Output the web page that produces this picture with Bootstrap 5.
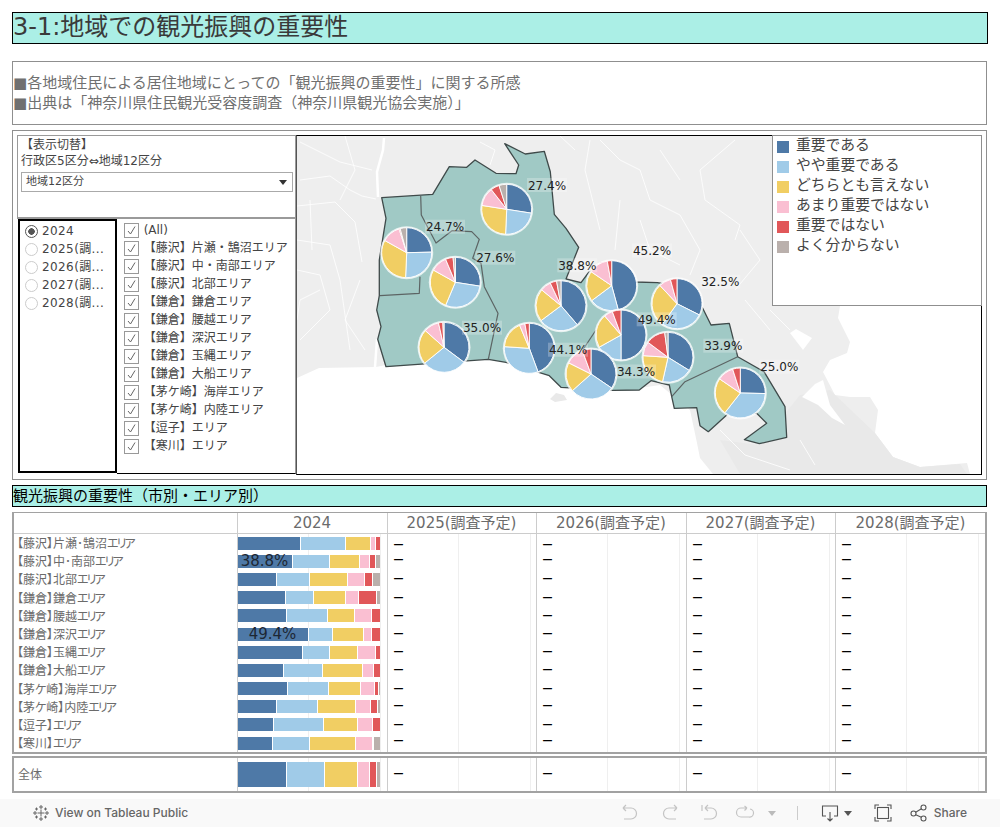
<!DOCTYPE html>
<html lang="ja">
<head>
<meta charset="utf-8">
<title>3-1:地域での観光振興の重要性</title>
<link rel="stylesheet" href="https://cdn.jsdelivr.net/npm/bootstrap@5.3.0/dist/css/bootstrap.min.css">
<style>
html,body{margin:0;width:1000px;height:827px;overflow:hidden;background:#fff}
body,.form-check-label{font-family:"DejaVu Sans","Noto Sans CJK JP",sans-serif;color:#333}
.dash-page{width:975px;margin-left:12px;padding-top:12px}
.ttl-main{height:32px;width:976px;background:#abefe6;border:1px solid #000;font-size:24px;line-height:28px;color:#3a3a3a}
.desc-box{height:64px;margin-top:17px;border:1px solid #8f8f8f;font-size:15px;line-height:20px;color:#707070}
.main-box{height:350px;margin-top:5px;border:1px solid #8f8f8f;padding:4px}
.left-col{width:279px;height:340px}
.sw-panel{height:84px;border:1px solid #9a9a9a;border-bottom-width:2px;font-size:12px;line-height:16px;padding:1px 2px 0 3px;color:#444}
.sw-sel{height:20px;margin-top:3px;border:1px solid #aaa;font-size:11px;line-height:18px;padding:0 5px 0 4px;color:#444}
.sw-caret{width:0;height:0;border-left:4px solid transparent;border-right:4px solid transparent;border-top:5px solid #333}
.flt-row{height:256px}
.yr-box{width:99px;margin-left:1px;border:2px solid #000;padding-top:1px;height:254px}
.chk-box{width:180px;border-right:1px solid #9a9a9a;border-bottom:1px solid #000;padding:2px 0 0 7px;height:255px}
.opt-line{height:18px;font-size:12px;line-height:18px;white-space:nowrap;color:#444}
.opt-line .form-check-input{margin:0;flex:none;border-radius:0;box-shadow:none;background-color:#fff}
.yr-box .opt-line{padding-left:5px;letter-spacing:.4px}
.yr-box .opt-line .form-check-input{width:13px;height:13px;border-radius:50%;border:1px solid #ccc;margin-right:4px;background-image:none}
.yr-box .opt-line .form-check-input:checked{border-color:#555;background-image:radial-gradient(circle,#555 0 3px,#fff 3.5px)}
.chk-box .form-check-input{width:15px;height:15px;border:1px solid #999;margin-right:5px;background-size:13px 13px;background-position:center;background-repeat:no-repeat;background-image:url("data:image/svg+xml,%3Csvg xmlns='http://www.w3.org/2000/svg' viewBox='0 0 13 13'%3E%3Cpath d='M3 7l2.500 3L10 2.500' fill='none' stroke='%23666' stroke-width='1'/%3E%3C/svg%3E")}
.map-wrap{width:686px;height:340px;border:1px solid #000;border-left-color:#555}
.map-wrap svg{display:block}
.map-legend{position:absolute;top:-1px;right:-1px;width:210px;height:171px;background:#fff;border:1px solid #8f8f8f;padding:1px 0 0 4px;font-size:14.8px;color:#444}
.lg-row{height:20px;line-height:16px;white-space:nowrap}
.lg-sw{width:12px;height:12px;margin-right:7px;flex:none}
.lg-txt{margin-top:-4px}
.c0{background:#4e79a7}.c1{background:#a0cbe8}.c2{background:#f1ce63}.c3{background:#fabfd2}.c4{background:#e15759}.c5{background:#bab0ac}
.ttl-sub{height:22px;margin-top:5px;background:#abefe6;border:1px solid #000;font-size:15px;line-height:20px;color:#000}
.tbl-box{margin-top:5px;border:2px solid #a2a2a2;border-top-width:1px;height:242.4px}
.tot-box{margin-top:1.6px;border:2px solid #a2a2a2;height:37px}
.t-row{display:flex}
.t-hd{height:21px;border-bottom:1px solid #ccc;font-size:15px;line-height:20px;color:#6b6b6b}
.t-body{height:18.2px}
.t-name{width:223.5px;flex:none;font-size:12px;color:#6b6b6b;padding-left:3px;font-family:"Noto Sans CJK JP",sans-serif;font-feature-settings:"palt";line-height:18px;white-space:nowrap;border-right:1px solid #ccc}
.t-kana{letter-spacing:-2px}
.t-col{flex:none;border-right:1px solid #ccc;text-align:center;position:relative}
.w150{width:150px}.w149{width:149px}.wl{width:150px;border-right:0}
.t-grid{background:linear-gradient(#efefef,#efefef) 70px 0/1px 100% no-repeat,linear-gradient(#efefef,#efefef) 142px 0/1px 100% no-repeat}
.t-bar{height:13px;width:142px}
.tot-box .t-bar{height:25px}
.t-seg{height:100%;border-right:1px solid #fff;text-align:center;font-size:15px;line-height:13px;color:#1d2733;overflow:visible;white-space:nowrap}
.t-seg:last-child{border-right:0}
.t-dash{font-size:10px;line-height:1;color:#000;text-align:left;padding-left:6px;font-weight:700}
.tb-bar{height:28px;margin-top:6px;width:1000px;background:#f9f9f9;color:#666;font-family:Inter,"Liberation Sans",sans-serif;font-size:12px;font-weight:500;padding-top:1px}
.tb-ic{width:20px;height:20px;flex:none;display:block}
.tb-logo{margin-left:32px;display:block}
.tb-v{width:1px;height:14px;background:#ccc}
.tb-car{width:0;height:0;border-left:4px solid transparent;border-right:4px solid transparent;border-top:5px solid #bbb;flex:none}
.tb-car.on{border-top-color:#555}
.g4{margin-left:4px}.g5{margin-left:5px}.g13{margin-left:13px}.g15{margin-left:15px}.g16{margin-left:16px}.g20{margin-left:20px}.g21{margin-left:21px}.g22{margin-left:22px}
.tb-end{width:33px;flex:none}
</style>
</head>
<body>
<div class="dash-page">
  <div class="ttl-main">3-1:地域での観光振興の重要性</div>
  <div class="desc-box d-flex flex-column justify-content-center">
    <div>■各地域住民による居住地域にとっての「観光振興の重要性」に関する所感</div>
    <div>■出典は「神奈川県住民観光受容度調査（神奈川県観光協会実施）」</div>
  </div>
  <div class="main-box d-flex">
    <div class="left-col">
      <div class="sw-panel">
        <div>【表示切替】</div>
        <div>行政区5区分⇔地域12区分</div>
        <div class="sw-sel d-flex align-items-center justify-content-between"><span>地域12区分</span><span class="sw-caret"></span></div>
      </div>
      <div class="flt-row d-flex">
        <div class="yr-box" id="yrs"></div>
        <div class="chk-box" id="chks"></div>
      </div>
    </div>
    <div class="map-wrap position-relative">
      <svg id="map" width="684" height="338" viewBox="297 136 684 338" xmlns="http://www.w3.org/2000/svg">
        <rect x="297" y="136" width="684" height="338" fill="#fff"/>
        <path fill="#eeeeee" d="M297,136H981V306H840L838,318L850,342L847,353L830,360L823,372L835,395L850,397L870,397L878,410L875,433L893,457L920,467L967,463L970,474H713L700,458L697,443L690,410L660,385L640,388L612,390L561,386L549,375L506,362L488,358L386,365L376,367L319,368L297,378Z"/>
        <path fill="#e9e9e9" d="M720,440L760,445L800,395L830,390L875,433L893,457L920,467L960,464L967,474H740ZM556,393l8,2l3,5l-12,2l-5,-3Z"/>
        <path fill="#fff" d="M790,333L796,329L812,338L803,350ZM802,397L815,384L823,380L830,405L845,425L832,418L818,405Z"/>
        <g fill="none" stroke="#fff" stroke-width=".8">
          <path stroke-width="2.500" d="M384,138L383,150L377,172L378,197M377,339L375,367"/>
          <path d="M300,142L340,162L372,170M300,180L330,176L350,190L362,196L376,199M297,206L335,202L355,222L362,262M297,240L330,245L340,280L350,350M320,290L300,300L297,320M310,200L312,250M345,136L355,170L340,200M297,270L320,275L330,310L300,340M360,280L345,320L365,350"/>
          <path d="M480,142L495,150L490,165M600,140L620,160L640,170L650,200L680,215L700,250L690,275M660,150L680,180M735,140L700,170L705,200L740,225L735,240M640,220L650,250L680,265M740,230L760,260L735,290M770,310L790,330M590,140L585,170L600,230M620,200L615,250M560,136L575,150"/>
          <path d="M920,136L900,160M720,430L745,455L790,470M800,440L815,465M880,320L900,340M745,300L770,330"/>
        </g>
        <g fill="#a0c9c5" stroke="#3f4a4a" stroke-width="1.3" stroke-linejoin="round">
          <path d="M381.7,197.7L432.7,194.3L449.3,166.7L466.7,167.3L475,160L496,173.3L516,173.7L518.7,165L504.7,143.7L525.3,154L544.3,151.3L550.3,171.7L554.3,214.3L566,228.3L578.7,247.3L566,279L581,282.7L589,272L612,262L635,282L657.3,282.7L672,285L702.7,308.3L711,325L729.3,323.3L737.7,356.7L764,371.7L785,406.7L786.7,437.3L759.3,443.7L744.3,439.7L766.7,423.3L756.7,413.3L730,412L708.3,431.7L700,425.7L696.7,407.7L674.3,408.3L671.7,396.7L669.3,385L651,380.7L639.3,390L612.7,390.3L561,387.3L549.3,375.7L506,362.3L488.3,359.3L386,366.7L377.7,339.3L381,326.7L376.7,310L379.3,295.7L379.3,260L386,218.3Z"/>
        </g>
        <g fill="none" stroke="#5c6464" stroke-width="1.2" stroke-linejoin="round">
          <path d="M420.7,196L421.3,215L436,243L452,230.7L471.7,231.7L479.3,239.3L472.7,258.3L481,263.3L484.3,286.7L498,313.3L488.3,359.3"/>
          <path d="M420,276.7L419.3,293.3L380,295.7"/>
          <path d="M596,330L582.7,350"/>
          <path d="M737.7,356.7L685,381.7L671.7,396.7"/>
        </g>
      </svg>
      <div class="map-legend" id="lg"></div>
    </div>
  </div>
  <div class="ttl-sub">観光振興の重要性（市別・エリア別）</div>
  <div class="tbl-box" id="tbl"></div>
  <div class="tot-box" id="tot"></div>
</div>
<div class="tb-bar d-flex align-items-center">
  <svg class="tb-logo" width="18" height="18" viewBox="0 0 18 18" fill="none" stroke="#666" stroke-width="1"><path d="M9 1v4M7 3h4M9 13v4M7 15h4M1 9h4M3 7v4M13 9h4M15 7v4M9 5.500v7M5.500 9h7M4.500 3.500v3M3 5h3M13.500 3.500v3M12 5h3M4.500 11.500v3M3 13h3M13.500 11.500v3M12 13h3"/></svg>
  <span class="g5">View on Tableau Public</span>
  <svg class="tb-ic ms-auto" viewBox="0 0 20 20" fill="none" stroke="#c4c4c4" stroke-width="1.2"><path d="M3 5h8a5.500 5.500 0 0 1 0 11H4M3 5l3-3M3 5l3 3" /></svg>
  <svg class="tb-ic g20" viewBox="0 0 20 20" fill="none" stroke="#c4c4c4" stroke-width="1.2"><path d="M17 5H9a5.500 5.500 0 0 0 0 11h7M17 5l-3-3M17 5l-3 3"/></svg>
  <svg class="tb-ic g20" viewBox="0 0 20 20" fill="none" stroke="#c4c4c4" stroke-width="1.2"><path d="M5 5h6a5.500 5.500 0 0 1 0 11H4M5 5l3-3M5 5l3 3M2 2v6"/></svg>
  <svg class="tb-ic g15" viewBox="0 0 20 20" fill="none" stroke="#c4c4c4" stroke-width="1.2"><path d="M12 5H6a4 4 0 0 0 0 9h8a4 4 0 0 0 1-8M12 5l-2.500-2M12 5l-2.500 2.500"/></svg>
  <span class="tb-car g13"></span>
  <span class="tb-v g21"></span>
  <svg class="tb-ic g22" viewBox="0 0 20 20" fill="none" stroke="#555" stroke-width="1.1"><path d="M6 13H2.500V3h15v10H14M10 9v9M7.500 15.500L10 18l2.500-2.500"/></svg>
  <span class="tb-car on g4"></span>
  <svg class="tb-ic g21" viewBox="0 0 20 20" fill="none" stroke="#555" stroke-width="1.1"><path d="M2 6V2h4M14 2h4v4M18 14v4h-4M6 18H2v-4"/><rect x="4.500" y="4.500" width="11" height="11"/></svg>
  <svg class="tb-ic g16" viewBox="0 0 20 20" fill="none" stroke="#555" stroke-width="1.1"><circle cx="4.500" cy="10.500" r="2.500"/><circle cx="14.500" cy="4.500" r="2.500"/><circle cx="14.500" cy="15.500" r="2.500"/><path d="M6.700 9.200L12.400 5.800M6.700 11.800L12.400 14.300"/></svg>
  <span class="g5">Share</span>
  <span class="tb-end"></span>
</div>
<script src="https://cdn.jsdelivr.net/npm/bootstrap@5.3.0/dist/js/bootstrap.bundle.min.js"></script>
<script>
const cols=['#4e79a7','#a0cbe8','#f1ce63','#fabfd2','#e15759','#bab0ac'];
const rows=[
['【藤沢】片瀬･鵠沼エリア',[189,135,75,15,12],2,''],
['【藤沢】中･南部エリア',[165,111,90,30,18,12],-1,'38.8%'],
['【藤沢】北部エリア',[117,99,114,51,24,21],0,''],
['【鎌倉】鎌倉エリア',[144,84,96,39,54,9],0,''],
['【鎌倉】腰越エリア',[147,123,81,51,24],0,''],
['【鎌倉】深沢エリア',[213,72,93,24,24],0,'49.4%'],
['【鎌倉】玉縄エリア',[195,81,84,54,12],0,''],
['【鎌倉】大船エリア',[138,117,120,33,18],0,''],
['【茅ケ崎】海岸エリア',[150,123,96,42,12,3],0,''],
['【茅ケ崎】内陸エリア',[117,123,114,45,21,6],-1,''],
['【逗子】エリア',[108,150,102,45,21],0,''],
['【寒川】エリア',[105,111,138,51,3,18],-2,'']];
const total=[147,114,99,36,21,9];
function bar(v,lab){return '<div class="t-bar d-flex">'+v.map((x,i)=>`<div class="t-seg c${i}" style="width:${x/3}px">${i==0&&lab?lab:''}</div>`).join('')+'</div>';}
const W=['w150','w149','w150','w149','wl'];
function cells(v,lab,dy){
  let h=`<div class="t-col w150 t-grid d-flex align-items-center">${bar(v,lab)}</div>`;
  for(let i=1;i<5;i++)h+=`<div class="t-col ${W[i]} t-grid d-flex align-items-center"><div class="t-dash" style="margin-top:${dy*2}px">—</div></div>`;
  return h;
}
let t='<div class="t-row t-hd"><div class="t-name"></div>';
['2024','2025(調査予定)','2026(調査予定)','2027(調査予定)','2028(調査予定)'].forEach((y,i)=>t+=`<div class="t-col ${W[i]}">${y}</div>`);
t+='</div>';
rows.forEach(r=>t+=`<div class="t-row t-body"><div class="t-name">${r[0].replace('エリア','<span class="t-kana">エリア</span>')}</div>${cells(r[1],r[3],r[2])}</div>`);
document.getElementById('tbl').innerHTML=t;
document.getElementById('tot').innerHTML=`<div class="t-row h-100"><div class="t-name d-flex align-items-center ps-1">全体</div>${cells(total,'',0)}</div>`;
document.getElementById('yrs').innerHTML=['2024','2025(調...','2026(調...','2027(調...','2028(調...'].map((y,i)=>`<div class="opt-line d-flex align-items-center"><input class="form-check-input" type="radio" name="yr" ${i==0?'checked':''}><span>${y}</span></div>`).join('');
document.getElementById('chks').innerHTML=['(All)','【藤沢】片瀬・鵠沼エリア','【藤沢】中・南部エリア','【藤沢】北部エリア','【鎌倉】鎌倉エリア','【鎌倉】腰越エリア','【鎌倉】深沢エリア','【鎌倉】玉縄エリア','【鎌倉】大船エリア','【茅ケ崎】海岸エリア','【茅ケ崎】内陸エリア','【逗子】エリア','【寒川】エリア'].map(n=>`<div class="opt-line d-flex align-items-center"><input class="form-check-input" type="checkbox" checked><span>${n}</span></div>`).join('');
document.getElementById('lg').innerHTML=['重要である','やや重要である','どちらとも言えない','あまり重要ではない','重要ではない','よく分からない'].map((n,i)=>`<div class="lg-row d-flex align-items-center"><span class="lg-sw c${i}"></span><span class="lg-txt">${n}</span></div>`).join('');
const NS='http://www.w3.org/2000/svg',svg=document.getElementById('map');
function el(n,a,p){const e=document.createElementNS(NS,n);for(const k in a)e.setAttribute(k,a[k]);(p||svg).appendChild(e);return e;}
const pies=[[506.7,209.3,2],[406.7,252.7,11],[455.3,282.3,9],[444,347.3,8],[529.3,348.3,0],[561,305.7,1],[611.7,285.7,6],[677,303.7,7],[668,357.3,3],[621,335,5],[591,374,4],[740.3,393,10]];
pies.forEach(p=>{
  const v=rows[p[2]][1],s=v.reduce((a,b)=>a+b,0),R=25;let a=0;
  el('circle',{cx:p[0],cy:p[1],r:R+1.500,fill:'#fff','fill-opacity':.75});
  v.forEach((x,i)=>{
    const b=a+x/s*2*Math.PI,big=b-a>Math.PI?1:0;
    const f=t=>(p[0]+R*Math.sin(t)).toFixed(2)+','+(p[1]-R*Math.cos(t)).toFixed(2);
    el('path',{d:`M${p[0]},${p[1]}L${f(a)}A${R},${R} 0 ${big} 1 ${f(b)}Z`,fill:cols[i],stroke:'#fff','stroke-width':.9});
    a=b;
  });
});
[['27.4%',547,185],['24.7%',445,226.7],['27.6%',495.3,257.7],['35.0%',482,327.7],['44.1%',568,349.7],['38.8%',577.3,265.3],['45.2%',652,250.5],['49.4%',656.7,319.3],['34.3%',636,371.500],['32.5%',720.3,281.7],['33.9%',723.3,345.7],['25.0%',779.3,366.7]].forEach(l=>{
  el('rect',{x:l[1]-20,y:l[2]-7,width:40,height:14,fill:'#fff','fill-opacity':.25});
  const t=el('text',{x:l[1],y:l[2]+4.500,'text-anchor':'middle','font-size':12,fill:'#222','font-family':'DejaVu Sans'});t.textContent=l[0];
});
</script>
</body>
</html>
